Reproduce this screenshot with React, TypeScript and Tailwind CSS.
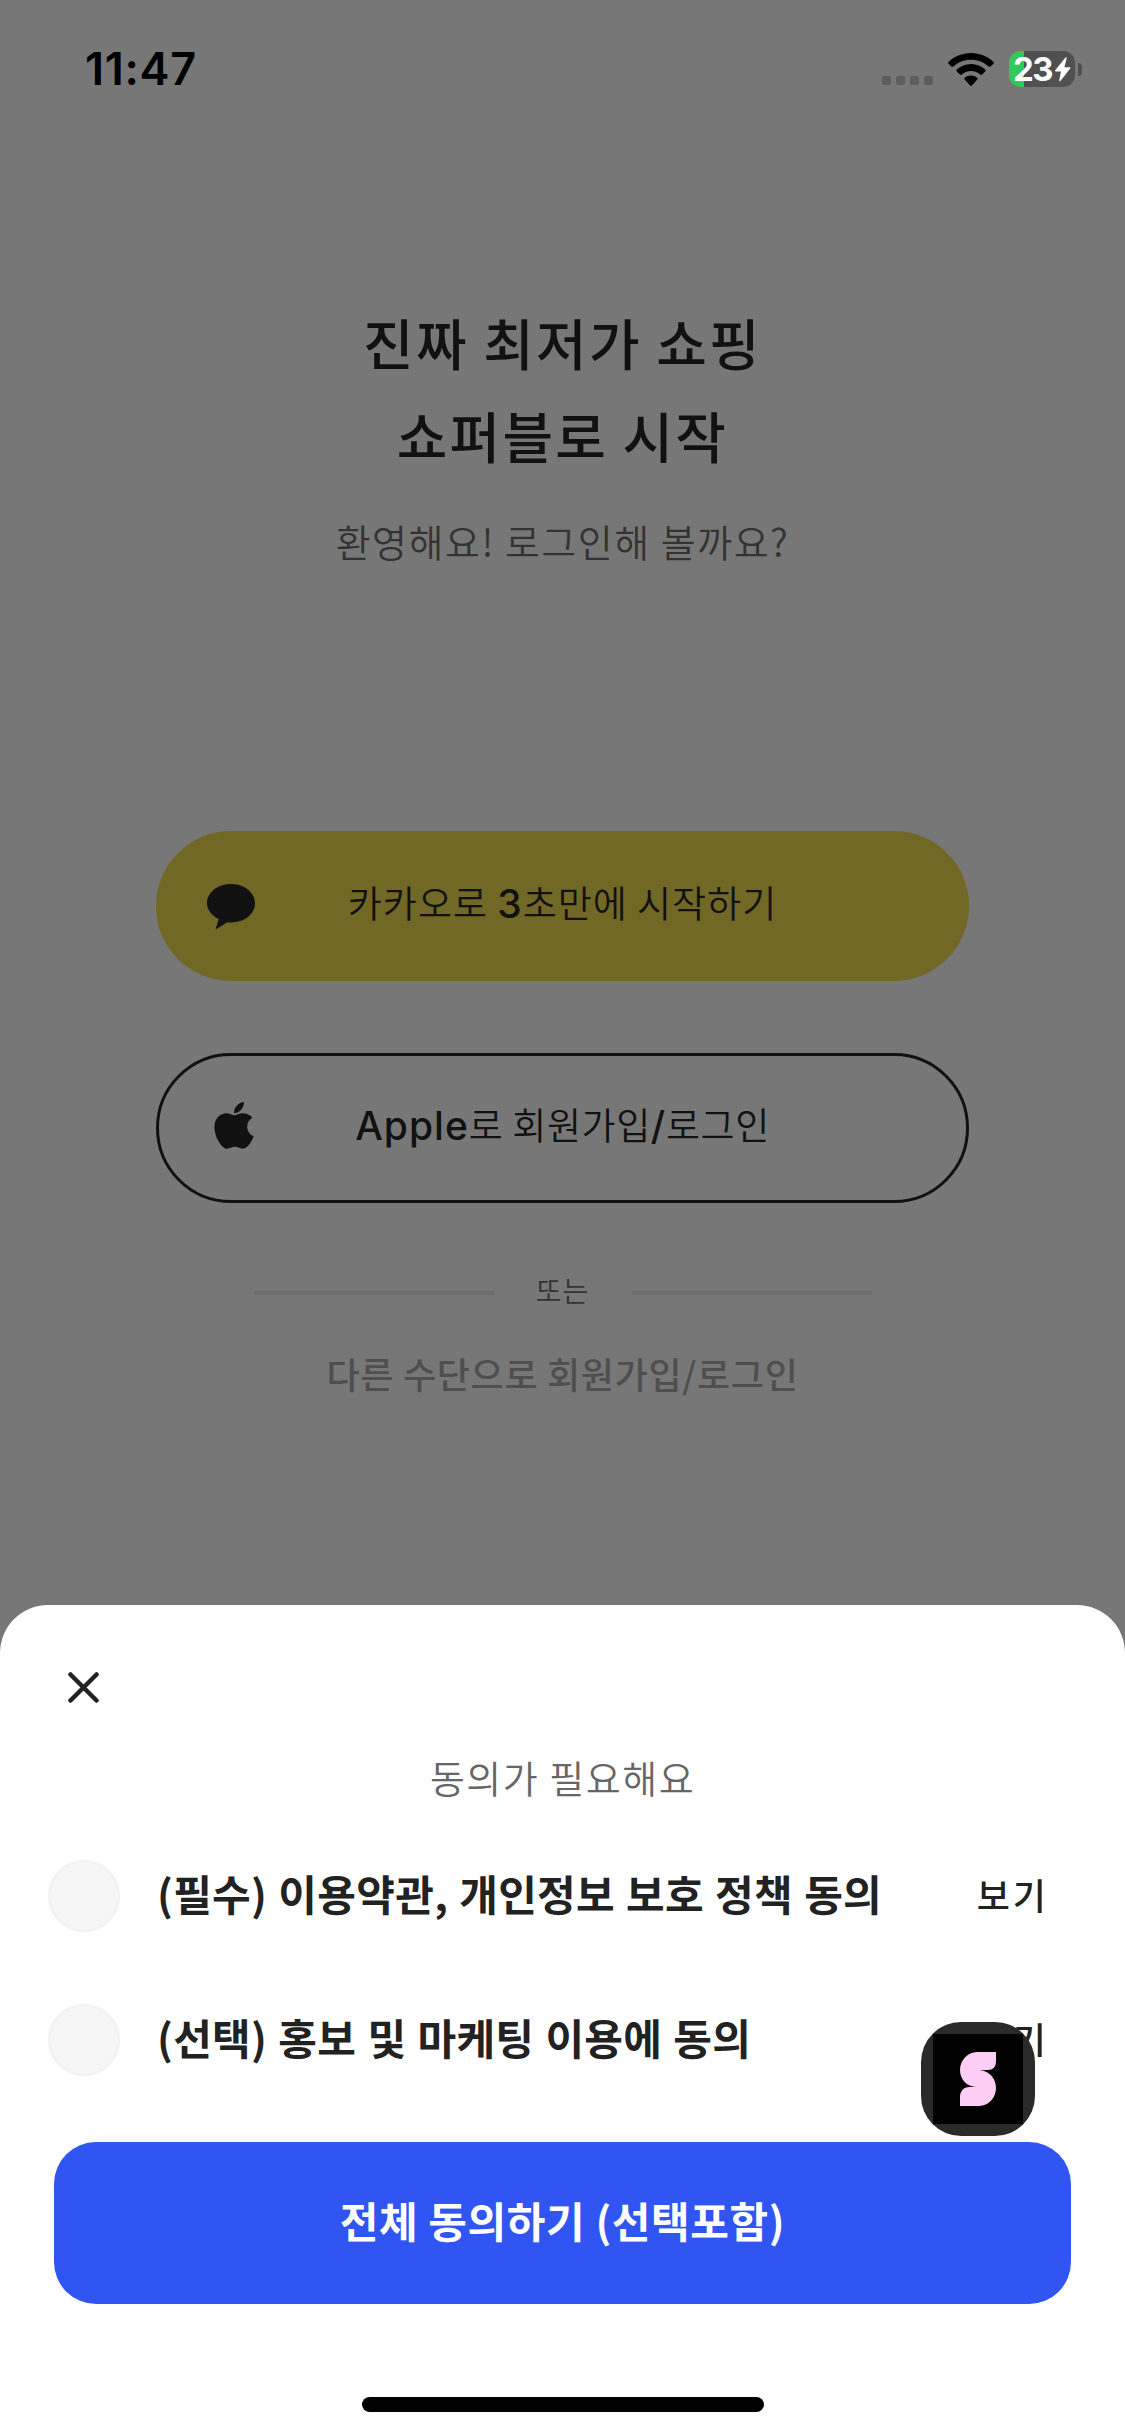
import { useState } from "react";

const KR = "font-['Noto_Sans_CJK_KR',sans-serif]";

const terms = [
    { id: "required", label: "(필수) 이용약관, 개인정보 보호 정책 동의" },
    { id: "marketing", label: "(선택) 홍보 및 마케팅 이용에 동의" },
];

// 상단 상태바
const StatusBar = () => (
    <div className="flex h-[138px] items-start justify-between pt-[51px] pr-[43px] pl-[85px]">
        <span className="font-['Inter',sans-serif] text-[45px] leading-[36px] font-semibold tracking-[0.700px] text-black">
            11:47
        </span>
        <div className="flex h-9 items-center">
            {/* 신호 없음 표시 */}
            <div className="mt-[23px] mr-[15px] flex gap-[5px]">
                {[0, 1, 2, 3].map((dot) => (
                    <i key={dot} className="h-[9px] w-[9px] rounded-[2px] bg-[#5d5d5d]" />
                ))}
            </div>
            <svg className="mr-[15px] h-[33px] w-[46px]" viewBox="0 0 46 33" fill="black">
                <path d="M23 0C31.9 0 40 3.500 45.500 8.900q.9.9 0 1.800l-2.900 2.900q-.9.9-1.800 0C36.200 9.400 29.900 6.700 23 6.700S9.800 9.400 5.200 13.600q-.9.9-1.800 0L.5 10.700q-.9-.9 0-1.800C6 3.500 14.100 0 23 0z" />
                <path d="M23 11c5.500 0 10.500 2.100 14.200 5.600q.9.900 0 1.800l-3.200 3.200q-.9.800-1.800 0C29.800 19.300 26.600 18 23 18s-6.800 1.300-9.200 3.600q-.9.800-1.800 0l-3.200-3.200q-.9-.9 0-1.800C12.500 13.100 17.500 11 23 11z" />
                <path d="M23 22.600c2.400 0 4.500.8 6.100 2.100q1 .8.100 1.700L23.900 32.500q-.9.900-1.800 0L16.800 26.400q-.9-.9.100-1.700c1.600-1.300 3.700-2.100 6.100-2.100z" />
            </svg>
            {/* 배터리 */}
            <div className="flex h-9 w-[66px] items-center justify-center rounded-[12px] bg-[linear-gradient(90deg,#34c759_15px,#505050_15px)] text-white">
                <span className="font-['Inter',sans-serif] text-[33px] leading-9 font-bold tracking-[-1.500px]">23</span>
                <svg className="ml-[2px] h-[25px] w-[17px]" viewBox="0 0 17 25" fill="currentColor">
                    <path d="M11.500.6 1.200 13.200q-.7 1.100.5 1.200h5.300L5.200 23.400q-.1 1.500 1.200.6L16.200 11.400q.7-1.100-.6-1.200h-5.200L12.600 1.400q.1-1.600-1.100-.8z" />
                </svg>
            </div>
            <i className="ml-[3px] h-[13px] w-1 rounded-r-full bg-[#505050]" />
        </div>
    </div>
);

// 플로팅 로고 버튼
const FloatingLogo = () => (
    <button
        aria-label="S"
        className="absolute top-[417px] left-[921px] flex h-[114px] w-[114px] items-center justify-center rounded-[40px] bg-[#2a2a2a]"
    >
        <span className="flex h-[90px] w-[90px] items-center justify-center bg-black">
            <svg className="h-[54px] w-9" viewBox="0 0 36 54" fill="#fdcdf5">
                <path d="M36 0v9c0 6-3 9-8 9h-8c9.500 1 16 8.500 16 18s-7 18-17 18H0v-9c0-6 4-10 9-10h7C7 34.500 0 27.500 0 18S7.500 0 17 0z" />
            </svg>
        </span>
    </button>
);

const App = () => {
    const [checked, setChecked] = useState<string[]>([]);

    const toggle = (id: string) => {
        setChecked((prev) => (prev.includes(id) ? prev.filter((v) => v !== id) : [...prev, id]));
    };

    return (
        <div className={`flex h-[2436px] w-[1125px] flex-col overflow-hidden bg-[#777777] ${KR}`}>
            {/* 로그인 화면 (딤 처리된 상태) */}
            <main className="flex h-[1605px] shrink-0 flex-col">
                <StatusBar />

                <h1 className="mt-[157px] text-center text-[55px] leading-[93px] font-medium tracking-[2.200px] text-[#111]">
                    진짜 최저가 쇼핑
                    <br />
                    쇼퍼블로 시작
                </h1>
                <p className="mt-[31px] text-center text-[38px] leading-[57px] font-[350] tracking-[1.500px] text-[#333]">
                    환영해요! 로그인해 볼까요?
                </p>

                <div className="mx-[156px] mt-[262px] flex flex-col gap-[72px]">
                    {/* 카카오 로그인 */}
                    <button className="relative flex h-[150px] items-center justify-center rounded-full bg-[#706824] pb-[4px] text-[37px] font-[350] tracking-[1px] text-[#111]">
                        <svg className="absolute top-[53px] left-[51px] h-[45px] w-12" viewBox="0 0 48 45" fill="#111">
                            <path d="M24 0C37.300 0 48 8.500 48 19.300S37.300 38.500 24 38.500q-2 0-3.800-.2L9.500 45q-1 .2-.7-.8l3-9C4.500 31.500 0 26 0 19.300 0 8.500 10.700 0 24 0z" />
                        </svg>
                        <span>
                            카카오로 <span className="font-['Inter',sans-serif] text-[39px] font-medium">3</span>초만에 시작하기
                        </span>
                    </button>

                    {/* 애플 로그인 */}
                    <button className="relative flex h-[150px] items-center justify-center rounded-full border-[3px] border-[#111] pb-[4px] text-[37px] font-[350] tracking-[0.600px] text-[#111]">
                        <svg className="absolute top-[46px] left-[55px] h-[49px] w-10" viewBox="0 0 384 470" preserveAspectRatio="none" fill="#111">
                            <path transform="translate(0,-32)" d="M318.700 268.700c-.2-36.700 16.400-64.400 50-84.800-18.800-26.900-47.200-41.700-84.700-44.600-35.500-2.800-74.300 20.700-88.500 20.700-15 0-49.400-19.700-76.400-19.700C63.300 141.200 4 184.800 4 273.500q0 39.300 14.400 81.200c12.800 36.700 59 126.700 107.200 125.200 25.200-.6 43-17.900 75.800-17.900 31.800 0 48.300 17.900 76.400 17.900 48.600-.7 90.400-82.500 102.600-119.300-65.200-30.700-61.700-90-61.700-91.900zm-56.600-164.200c27.300-32.400 24.800-61.900 24-72.500-24.100 1.400-52 16.400-67.900 34.900-17.500 19.800-27.800 44.300-25.600 71.900 26.100 2 49.900-11.400 69.500-34.300z" />
                        </svg>
                        <span>
                            <span className="font-['Inter',sans-serif] text-[39px] font-medium tracking-[1px]">Apple</span>로 회원가입
                            <span className="font-['Inter',sans-serif] text-[39px] font-medium">/</span>로그인
                        </span>
                    </button>
                </div>

                {/* 구분선 */}
                <div className="mt-[67px] flex h-10 items-center justify-center">
                    <i className="mt-[5px] h-1 w-60 bg-[#6d6d6d]" />
                    <span className="w-[138px] text-center text-[28px] leading-10 font-[350] tracking-[1px] text-[#333]">또는</span>
                    <i className="mt-[5px] h-1 w-60 bg-[#6d6d6d]" />
                </div>

                <a href="#" className="mt-[36px] text-center text-[36px] leading-[54px] font-medium tracking-[0.700px] text-[#4f4f4f]">
                    다른 수단으로 회원가입/로그인
                </a>
            </main>

            {/* 약관 동의 바텀시트 */}
            <section className="relative flex h-[831px] flex-col rounded-t-[48px] bg-white">
                <button aria-label="닫기" className="mt-[67px] ml-[68px] h-[31px] w-[31px]">
                    <svg viewBox="0 0 31 31" fill="none" stroke="#222" strokeWidth="4.500" strokeLinecap="round">
                        <path d="M2.500 2.500l26 26M28.500 2.500l-26 26" />
                    </svg>
                </button>
                <p className="mt-[47px] text-center text-[38px] leading-[54px] font-[350] tracking-[1.500px] text-[#666]">동의가 필요해요</p>

                <ul className="mt-[56px] flex flex-col gap-[72px] pr-[76px] pl-12">
                    {terms.map((term) => (
                        <li key={term.id} className="flex h-[72px] items-center">
                            <button
                                aria-label={term.label}
                                onClick={() => toggle(term.id)}
                                className={`h-[72px] w-[72px] rounded-full border-2 ${
                                    checked.includes(term.id) ? "border-[#3055f3] bg-[#3055f3]" : "border-[#f2f2f2] bg-[#f6f6f6]"
                                }`}
                            />
                            <span className="ml-[37px] pb-[6px] text-[42px] leading-[60px] font-bold tracking-[0.300px] text-[#222] [word-spacing:1.3px]">
                                {term.label}
                            </span>
                            <a href="#" className="ml-auto pb-[4px] text-[36px] leading-[54px] font-medium tracking-[3px] text-[#222]">
                                보기
                            </a>
                        </li>
                    ))}
                </ul>

                <button className="mx-[54px] mt-[66px] h-[162px] rounded-[42px] bg-[#3055f3] pb-[7px] text-[42px] font-bold tracking-[0.600px] text-white">
                    전체 동의하기 (선택포함)
                </button>
                <i className="mx-auto mt-[93px] h-[15px] w-[402px] rounded-full bg-black" />

                <FloatingLogo />
            </section>
        </div>
    );
};

export default App;
